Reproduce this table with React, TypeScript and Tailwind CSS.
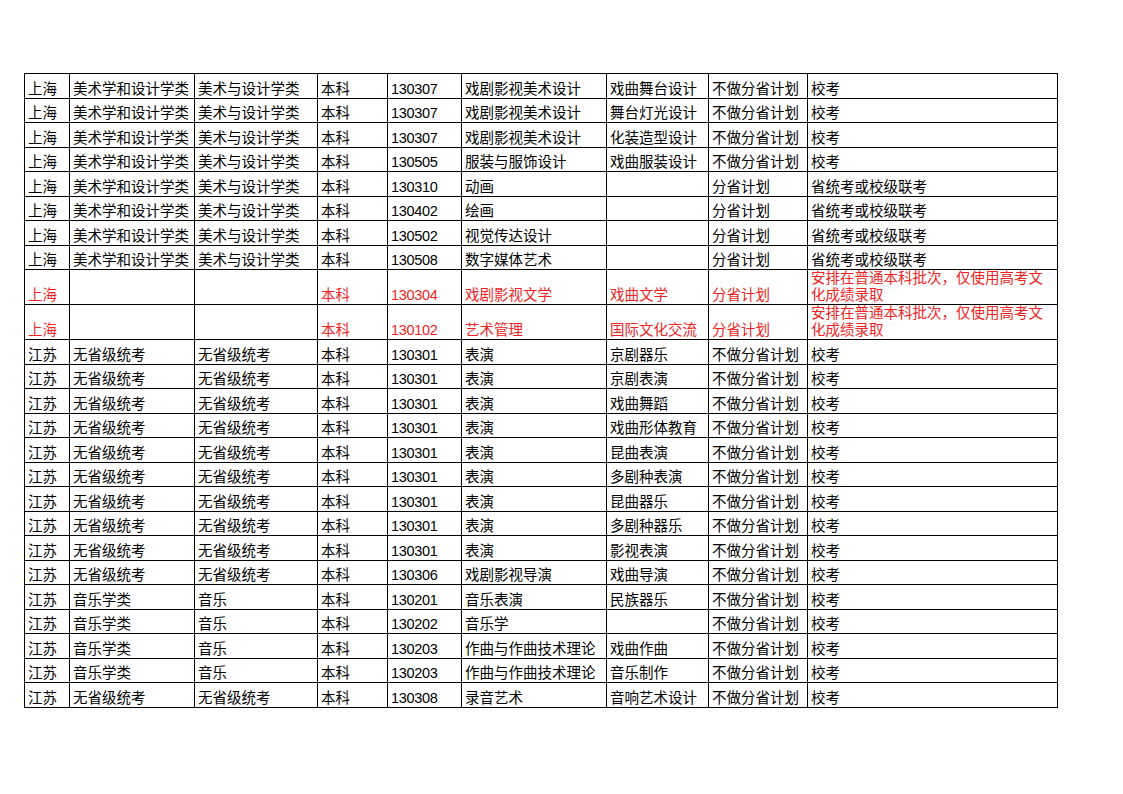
const cols = ["w-[45px]", "w-[125px]", "w-[123px]", "w-[70px]", "w-[74px]", "w-[145px]", "w-[102px]", "w-[99px]", "w-[250px]"];

type Row = string[];

const sh = (a: string, b: string, code: string, m: string, d: string, plan: string, exam: string): Row => [
  "上海", a, b, "本科", code, m, d, plan, exam,
];
const js = (a: string, b: string, code: string, m: string, d: string): Row => [
  "江苏", a, b, "本科", code, m, d, "不做分省计划", "校考",
];

const topRows: Row[] = [
  sh("美术学和设计学类", "美术与设计学类", "130307", "戏剧影视美术设计", "戏曲舞台设计", "不做分省计划", "校考"),
  sh("美术学和设计学类", "美术与设计学类", "130307", "戏剧影视美术设计", "舞台灯光设计", "不做分省计划", "校考"),
  sh("美术学和设计学类", "美术与设计学类", "130307", "戏剧影视美术设计", "化装造型设计", "不做分省计划", "校考"),
  sh("美术学和设计学类", "美术与设计学类", "130505", "服装与服饰设计", "戏曲服装设计", "不做分省计划", "校考"),
  sh("美术学和设计学类", "美术与设计学类", "130310", "动画", "", "分省计划", "省统考或校级联考"),
  sh("美术学和设计学类", "美术与设计学类", "130402", "绘画", "", "分省计划", "省统考或校级联考"),
  sh("美术学和设计学类", "美术与设计学类", "130502", "视觉传达设计", "", "分省计划", "省统考或校级联考"),
  sh("美术学和设计学类", "美术与设计学类", "130508", "数字媒体艺术", "", "分省计划", "省统考或校级联考"),
];

const redRows: Row[] = [
  ["上海", "", "", "本科", "130304", "戏剧影视文学", "戏曲文学", "分省计划", ""],
  ["上海", "", "", "本科", "130102", "艺术管理", "国际文化交流", "分省计划", ""],
];

const bottomRows: Row[] = [
  js("无省级统考", "无省级统考", "130301", "表演", "京剧器乐"),
  js("无省级统考", "无省级统考", "130301", "表演", "京剧表演"),
  js("无省级统考", "无省级统考", "130301", "表演", "戏曲舞蹈"),
  js("无省级统考", "无省级统考", "130301", "表演", "戏曲形体教育"),
  js("无省级统考", "无省级统考", "130301", "表演", "昆曲表演"),
  js("无省级统考", "无省级统考", "130301", "表演", "多剧种表演"),
  js("无省级统考", "无省级统考", "130301", "表演", "昆曲器乐"),
  js("无省级统考", "无省级统考", "130301", "表演", "多剧种器乐"),
  js("无省级统考", "无省级统考", "130301", "表演", "影视表演"),
  js("无省级统考", "无省级统考", "130306", "戏剧影视导演", "戏曲导演"),
  js("音乐学类", "音乐", "130201", "音乐表演", "民族器乐"),
  js("音乐学类", "音乐", "130202", "音乐学", ""),
  js("音乐学类", "音乐", "130203", "作曲与作曲技术理论", "戏曲作曲"),
  js("音乐学类", "音乐", "130203", "作曲与作曲技术理论", "音乐制作"),
  js("无省级统考", "无省级统考", "130308", "录音艺术", "音响艺术设计"),
];

const cell = "border border-black px-[3px] pb-0 align-bottom whitespace-nowrap leading-[17px] overflow-hidden";

const PlainRow = ({ row }: { row: Row }) => (
  <tr className="h-[24.5px]">
    {row.map((v, i) => (
      <td key={i} className={`${cell} text-black ${i === 4 ? "tracking-[-0.3px]" : ""}`}>
        {v}
      </td>
    ))}
  </tr>
);

const RedRow = ({ row }: { row: Row }) => (
  <tr className="h-[34.5px]">
    {row.map((v, i) =>
      i === 8 ? (
        <td key={i} className="border border-black px-[3px] pb-0 align-bottom leading-[17px] text-[#ee2424]">
          安排在普通本科批次，仅使用高考文
          <br />
          化成绩录取
        </td>
      ) : (
        <td key={i} className={`${cell} text-[#ee2424] ${i === 4 ? "tracking-[-0.3px]" : ""}`}>
          {v}
        </td>
      )
    )}
  </tr>
);

export default function App() {
  return (
    <div
      className="w-[1123px] h-[794px] bg-white pt-[73px] pl-[24px]"
      style={{ fontFamily: '"Liberation Sans", "Noto Sans CJK SC", sans-serif' }}
    >
      <table className="border-collapse table-fixed text-[14.5px] w-[1034px]">
        <colgroup>
          {cols.map((c, i) => (
            <col key={i} className={c} />
          ))}
        </colgroup>
        <tbody>
          {topRows.map((r, i) => (
            <PlainRow key={"t" + i} row={r} />
          ))}
          {redRows.map((r, i) => (
            <RedRow key={"r" + i} row={r} />
          ))}
          {bottomRows.map((r, i) => (
            <PlainRow key={"b" + i} row={r} />
          ))}
        </tbody>
      </table>
    </div>
  );
}
